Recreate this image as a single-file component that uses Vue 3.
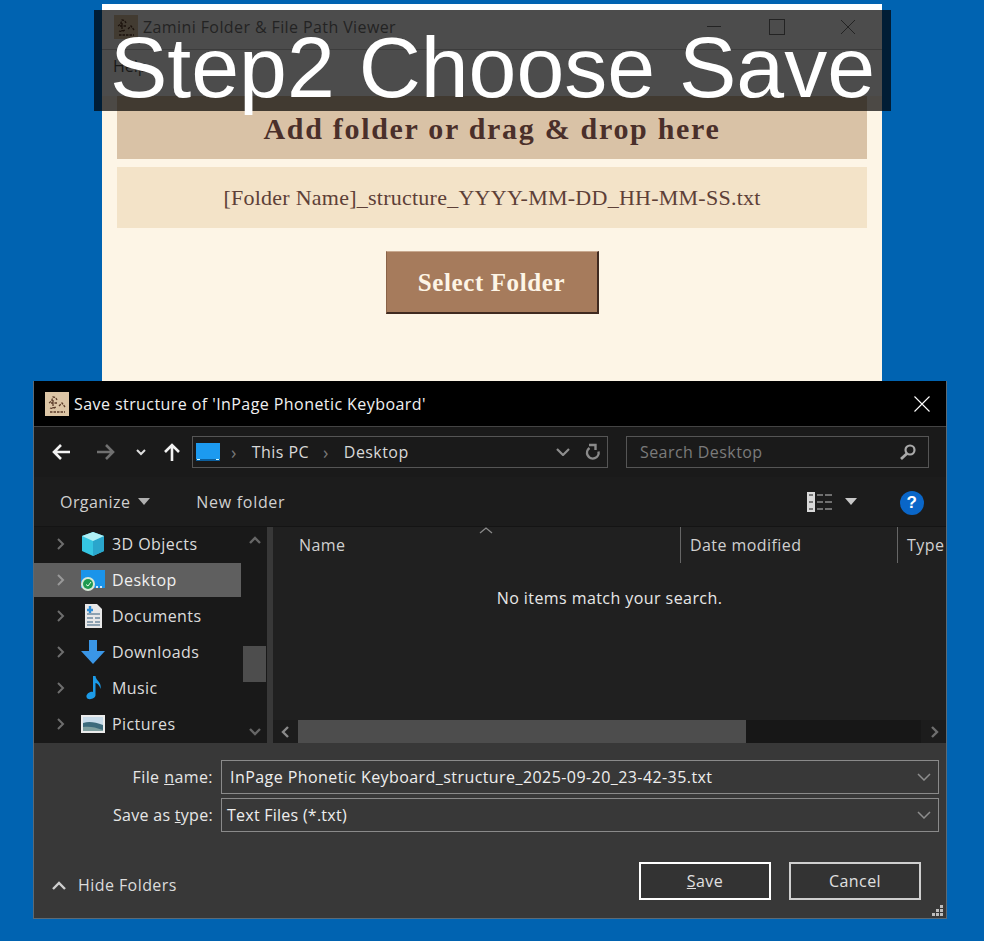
<script setup>
const carpetas = ['3D Objects', 'Desktop', 'Documents', 'Downloads', 'Music', 'Pictures']
</script>

<template>
  <div class="escritorio">
    <!-- ventana de la app, detras del dialogo -->
    <section class="app-win">
      <header class="app-title">
        <svg class="app-icon" viewBox="0 0 24 24">
          <rect width="24" height="24" fill="#dcc5a5" />
          <path d="M4 11c2-1 3-3 4-6 2 0 3 1 4 3M6 11h7M8 8v8M5 16c2 1 4 0 6-1M14 14l3-3 3 4M5 20h15" stroke="#5a3a28" stroke-width="1.300" stroke-dasharray="2.500 1" fill="none" />
        </svg>
        <span class="app-name">Zamini Folder &amp; File Path Viewer</span>
        <span class="win-min"></span>
        <span class="win-max"></span>
        <svg class="win-x" viewBox="0 0 16 16"><path d="M1 1l14 14M15 1L1 15" stroke="#777" fill="none" /></svg>
      </header>
      <div class="app-menu">Help</div>
      <div class="app-body">
        <div class="zona-drop">Add folder or drag &amp; drop here</div>
        <div class="zona-nombre">[Folder Name]_structure_YYYY-MM-DD_HH-MM-SS.txt</div>
        <button class="btn-folder">Select Folder</button>
      </div>
    </section>

    <!-- titulo sobrepuesto -->
    <div class="rotulo">Step2 Choose Save</div>

    <!-- dialogo guardar -->
    <section class="dialogo">
      <header class="dlg-title">
        <svg class="dlg-icon" viewBox="0 0 24 24">
          <rect width="24" height="24" fill="#dcc5a5" />
          <path d="M4 11c2-1 3-3 4-6 2 0 3 1 4 3M6 11h7M8 8v8M5 16c2 1 4 0 6-1M14 14l3-3 3 4M5 20h15" stroke="#5a3a28" stroke-width="1.300" stroke-dasharray="2.500 1" fill="none" />
        </svg>
        <span>Save structure of 'InPage Phonetic Keyboard'</span>
        <svg class="dlg-x" viewBox="0 0 16 16"><path d="M.5.5l15 15M15.500.5l-15 15" stroke="#fff" stroke-width="1.100" fill="none" /></svg>
      </header>

      <div class="nav-row">
        <svg class="nav-arrow" viewBox="0 0 20 18"><path d="M19 9H3M10 2L3 9l7 7" stroke="#f2f2f2" stroke-width="2.600" fill="none" /></svg>
        <svg class="nav-arrow fwd" viewBox="0 0 20 18"><path d="M1 9h16M10 2l7 7-7 7" stroke="#707070" stroke-width="2.600" fill="none" /></svg>
        <svg class="nav-mini" viewBox="0 0 10 7"><path d="M1 1l4 4 4-4" stroke="#ddd" stroke-width="2" fill="none" /></svg>
        <svg class="nav-up" viewBox="0 0 18 20"><path d="M9 19V3M2 10l7-7 7 7" stroke="#f2f2f2" stroke-width="2.600" fill="none" /></svg>
        <div class="ruta">
          <svg class="pc" viewBox="0 0 24 18"><rect width="24" height="18" fill="#1c9af0" /><rect y="16" width="24" height="2" fill="#0c5f9e" /><path d="M1 16.500h3M20 16.500h3" stroke="#dff" /></svg>
          <span class="sep">&rsaquo;</span><span>This PC</span>
          <span class="sep">&rsaquo;</span><span>Desktop</span>
          <svg class="ruta-ch" viewBox="0 0 14 8"><path d="M1 1l6 6 6-6" stroke="#8d8d8d" stroke-width="2.200" fill="none" /></svg>
          <svg class="refresh" viewBox="0 0 16 18"><path d="M13.500 8.500a5.800 5.800 0 1 1-9-3.500M4 2h6.500v5" stroke="#8a8a8a" stroke-width="2.400" fill="none" /></svg>
        </div>
        <div class="buscar">
          <span>Search Desktop</span>
          <svg viewBox="0 0 18 18"><circle cx="11" cy="7" r="4.500" stroke="#a9a9a9" stroke-width="2.200" fill="none" /><path d="M8 10.500L2 16" stroke="#a9a9a9" stroke-width="2.800" /></svg>
        </div>
      </div>

      <div class="cmd-row">
        <span class="organize">Organize</span>
        <i class="tri"></i>
        <span class="nueva">New folder</span>
        <svg class="vista" viewBox="0 0 26 20">
          <rect width="8" height="20" fill="#d9d9d9" />
          <path d="M2 3h4M2 10h4M2 17h4" stroke="#777" stroke-width="2" />
          <path d="M10 3h6M18 3h7M10 10h6M18 10h7M10 17h6M18 17h7" stroke="#8c8c8c" stroke-width="1.500" />
        </svg>
        <i class="tri vista-tri"></i>
        <span class="ayuda">?</span>
      </div>

      <div class="paneles">
        <aside class="arbol">
          <ul>
            <li v-for="c in carpetas" :key="c" :class="{ sel: c === 'Desktop' }">
              <svg class="exp" viewBox="0 0 8 12"><path d="M1 1l5 5-5 5" stroke="#6e6e6e" stroke-width="2" fill="none" /></svg>
              <svg v-if="c === '3D Objects'" class="ico" viewBox="0 0 26 26">
                <path d="M13 1l11 4v15l-11 5-11-5V5z" fill="#35c6e2" /><path d="M13 10l11-5v15l-11 5z" fill="#2aa6cc" /><path d="M2 5l11-4 11 4-11 5z" fill="#b0f0f5" />
              </svg>
              <svg v-else-if="c === 'Desktop'" class="ico" viewBox="0 0 26 26">
                <rect x="1" y="3" width="24" height="18" fill="#1b94ea" /><path d="M16 20h8" stroke="#cfe8ff" stroke-dasharray="2 2" stroke-width="2" /><circle cx="8" cy="17" r="7" fill="#d8e8d8" /><circle cx="8" cy="17" r="5" fill="#1f9a50" /><path d="M6 17.500l2 1.500 3-4" stroke="#e8ffe8" fill="none" />
              </svg>
              <svg v-else-if="c === 'Documents'" class="ico" viewBox="0 0 26 26">
                <path d="M5 1h12l5 5v19H5z" fill="#e8e8e8" /><path d="M7 11h13M7 15h6M15 15h5M7 19h6M15 19h5M7 22h13" stroke="#6f8aa0" stroke-width="1.300" /><path d="M10 3v7M7 7h6" stroke="#2f8fd8" stroke-width="2.400" />
              </svg>
              <svg v-else-if="c === 'Downloads'" class="ico" viewBox="0 0 26 26">
                <path d="M9 1h8v11h8L13 25 1 12h8z" fill="#3a96e6" />
              </svg>
              <svg v-else-if="c === 'Music'" class="ico" viewBox="0 0 26 26">
                <path d="M13 1h2.500c.5 5 6.500 6 5 13-1-4-3-5.500-5-6v12c0 4-8 6-9 2-.7-3 4-6 6.500-5z" fill="#1c9be8" />
              </svg>
              <svg v-else class="ico" viewBox="0 0 26 26">
                <rect x="1" y="4" width="24" height="18" fill="#ececec" /><rect x="3" y="6" width="20" height="14" fill="#c8dcea" /><path d="M3 12c6-2 12-1 20 2v6H3z" fill="#3d6b7c" /><path d="M3 16c6-1 12 0 20 3v1H3z" fill="#7f9f9f" />
              </svg>
              <span>{{ c }}</span>
            </li>
          </ul>
          <div class="arbol-scroll">
            <svg viewBox="0 0 12 8"><path d="M1 7l5-5 5 5" stroke="#666" stroke-width="2.400" fill="none" /></svg>
            <div class="arbol-pista"><div class="arbol-thumb"></div></div>
            <svg viewBox="0 0 12 8"><path d="M1 1l5 5 5-5" stroke="#666" stroke-width="2.400" fill="none" /></svg>
          </div>
        </aside>
        <main class="lista">
          <div class="cabecera">
            <svg class="orden" viewBox="0 0 14 7"><path d="M1 6l6-5 6 5" stroke="#8a8a8a" stroke-width="1.300" fill="none" /></svg>
            <span class="col-nombre">Name</span>
            <span class="col-fecha">Date modified</span>
            <span class="col-tipo">Type</span>
          </div>
          <div class="vacio">No items match your search.</div>
          <div class="h-scroll">
            <svg class="h-izq" viewBox="0 0 8 12"><path d="M7 1L2 6l5 5" stroke="#8a8a8a" stroke-width="2.400" fill="none" /></svg>
            <div class="h-pista"><div class="h-thumb"></div></div>
            <svg class="h-der" viewBox="0 0 8 12"><path d="M1 1l5 5-5 5" stroke="#6e6e6e" stroke-width="2.400" fill="none" /></svg>
          </div>
        </main>
      </div>

      <div class="pie">
        <div class="campo">
          <label>File <u>n</u>ame:</label>
          <div class="combo nombre">
            <span>InPage Phonetic Keyboard_structure_2025-09-20_23-42-35.txt</span>
            <svg viewBox="0 0 14 8"><path d="M1 1l6 6 6-6" stroke="#8d8d8d" stroke-width="1.500" fill="none" /></svg>
          </div>
        </div>
        <div class="campo segundo">
          <label>Save as <u>t</u>ype:</label>
          <div class="combo tipo">
            <span>Text Files (*.txt)</span>
            <svg viewBox="0 0 14 8"><path d="M1 1l6 6 6-6" stroke="#8d8d8d" stroke-width="1.500" fill="none" /></svg>
          </div>
        </div>
        <div class="acciones">
          <svg class="ocultar-ch" viewBox="0 0 14 9"><path d="M1 8l6-6 6 6" stroke="#cfcfcf" stroke-width="2.400" fill="none" /></svg>
          <span class="ocultar">Hide Folders</span>
          <button class="btn-dlg guardar"><u>S</u>ave</button>
          <button class="btn-dlg">Cancel</button>
        </div>
        <svg class="grip" viewBox="0 0 12 12"><path d="M9 1h3v3H9zM5 5h3v3H5zM9 5h3v3H9zM1 9h3v3H1zM5 9h3v3H5zM9 9h3v3H9z" fill="#bdbdbd" /></svg>
      </div>
    </section>
  </div>
</template>

<style>
html, body { margin: 0; background: #0063b1; }
</style>

<style scoped>
.escritorio {
  position: relative;
  width: 984px;
  height: 941px;
  overflow: hidden;
  background: #0063b1;
  font-family: "Open Sans", sans-serif;
}

/* ventana de fondo */
.app-win {
  position: absolute;
  left: 102px;
  top: 4px;
  width: 780px;
  height: 377px;
  display: flex;
  flex-direction: column;
  background: #fdf5e6;
}
.app-title {
  height: 46px;
  flex: none;
  background: #fff;
  border-bottom: 1px solid #c8c8c8;
  display: flex;
  align-items: center;
  padding-left: 12px;
  box-sizing: border-box;
}
.app-icon { width: 24px; height: 24px; }
.app-name { margin-left: 5px; font-size: 16px; letter-spacing: .4px; color: #777; }
.win-min { width: 14px; height: 1px; background: #777; margin-left: auto; }
.win-max { width: 14px; height: 14px; border: 1px solid #777; margin-left: 48px; }
.win-x { width: 16px; height: 16px; margin: 0 26px 0 55px; }
.app-menu { height: 46px; flex: none; padding: 5px 0 0 11px; font-size: 16px; color: #555; background: #fff; box-sizing: border-box; }
.app-body { flex: 1; display: flex; flex-direction: column; align-items: center; padding: 0 15px; }
.zona-drop {
  align-self: stretch;
  height: 63px;
  background: #d9c2a6;
  color: #4a2f2a;
  display: flex;
  align-items: center;
  justify-content: center;
  padding-top: 2px;
  box-sizing: border-box;
  font: bold 30px "Liberation Serif", serif;
  letter-spacing: 1.700px;
}
.zona-nombre {
  align-self: stretch;
  height: 61px;
  margin-top: 8px;
  background: #f3e3c8;
  color: #5d4037;
  display: flex;
  align-items: center;
  justify-content: center;
  font: 22px "Liberation Serif", serif;
  letter-spacing: .25px;
}
.btn-folder {
  width: 213px;
  height: 63px;
  margin-top: 23px;
  background: #a67b5c;
  border: none;
  border-right: 2px solid #3f2a20;
  border-bottom: 2px solid #3f2a20;
  border-top: 1px solid #c9a98f;
  border-left: 1px solid #8a6348;
  color: #fdf5e6;
  font: bold 25px "Liberation Serif", serif;
  letter-spacing: .6px;
  padding: 2px 0 0;
}

/* rotulo */
.rotulo {
  position: absolute;
  left: 94px;
  top: 10px;
  width: 797px;
  height: 101px;
  background: rgba(0, 0, 0, .7);
  color: #fff;
  font: 86px/114px "Liberation Sans", sans-serif;
  text-align: center;
  white-space: nowrap;
}

/* dialogo */
.dialogo {
  position: absolute;
  left: 33px;
  top: 381px;
  width: 914px;
  height: 538px;
  display: flex;
  flex-direction: column;
  background: #383838;
  box-shadow: inset 0 0 0 1px #5c6a75;
  color: #e8e8e8;
  font-size: 16px;
  letter-spacing: .43px;
}
.dlg-title {
  height: 46px;
  flex: none;
  margin: 0 1px;
  background: #000;
  border-bottom: 1px solid #444;
  display: flex;
  align-items: center;
  padding-left: 11px;
  color: #f0f0f0;
  box-sizing: border-box;
}
.dlg-icon { width: 24px; height: 24px; margin-right: 5px; }
.dlg-x { width: 16px; height: 16px; margin: 0 16px 0 auto; }

.nav-row {
  height: 50px;
  flex: none;
  margin: 0 1px;
  background: #1a1a1a;
  display: flex;
  align-items: center;
  box-sizing: border-box;
}
.nav-arrow { width: 20px; height: 18px; margin-left: 17px; }
.nav-arrow.fwd { margin-left: 25px; }
.nav-mini { width: 10px; height: 7px; margin-left: 20px; }
.nav-up { width: 18px; height: 20px; margin-left: 17px; }
.ruta {
  width: 416px;
  height: 32px;
  margin-left: 11px;
  border: 1px solid #555;
  box-sizing: border-box;
  display: flex;
  align-items: center;
  color: #d8d8d8;
  padding-left: 3px;
}
.pc { width: 24px; height: 18px; margin-right: 11px; }
.sep { color: #777; margin-right: 15px; font-size: 18px; line-height: 1; }
.ruta span + .sep { margin-left: 14px; }
.ruta-ch { width: 14px; height: 8px; margin-left: auto; }
.refresh { width: 16px; height: 18px; margin: 0 6px 0 15px; }
.buscar {
  width: 303px;
  height: 32px;
  margin-left: 18px;
  border: 1px solid #555;
  box-sizing: border-box;
  display: flex;
  align-items: center;
  justify-content: space-between;
  padding: 0 11px 0 13px;
  color: #7b7b7b;
}
.buscar svg { width: 18px; height: 18px; }

.cmd-row {
  height: 49px;
  flex: none;
  margin: 0 1px;
  background: #1c1c1c;
  display: flex;
  align-items: center;
  color: #d0d0d0;
  font-size: 16px;
}
.organize { margin-left: 26px; }
.tri { width: 0; height: 0; border: 6px solid transparent; border-top: 7px solid #b0b0b0; border-bottom: 0; margin-left: 8px; }
.nueva { margin-left: 46px; letter-spacing: .7px; }
.vista { width: 26px; height: 20px; margin-left: auto; }
.vista-tri { border-top-color: #c8c8c8; margin-left: 12px; }
.ayuda {
  width: 24px;
  height: 24px;
  margin: 2px 22px 0 43px;
  border-radius: 50%;
  background: #0a66c8;
  color: #fff;
  font: bold 17px/24px "Liberation Sans", sans-serif;
  text-align: center;
}

.paneles {
  height: 217px;
  flex: none;
  margin: 0 1px;
  display: flex;
  border-top: 1px solid #141414;
  box-sizing: border-box;
}
.arbol { width: 233px; flex: none; background: #191919; display: flex; }
.arbol ul { list-style: none; margin: 0; padding: 0; flex: 1; min-width: 0; }
.arbol li {
  height: 34px;
  margin: 0 0 2px;
  display: flex;
  align-items: center;
  color: #dcdcdc;
}
.arbol li.sel { background: #5f5f5f; color: #f0f0f0; }
.exp { width: 8px; height: 12px; margin-left: 23px; }
.sel .exp path { stroke: #999; }
.ico { width: 26px; height: 26px; margin: 0 6px 0 15px; flex: none; }
.arbol-scroll { width: 24px; margin-left: 2px; flex: none; display: flex; flex-direction: column; align-items: center; padding: 9px 0 7px; box-sizing: border-box; }
.arbol-scroll svg { width: 12px; height: 8px; flex: none; }
.arbol-pista { flex: 1; width: 100%; }
.arbol-thumb { width: 23px; height: 36px; margin-top: 102px; background: #4d4d4d; }
.lista {
  flex: 1;
  min-width: 0;
  margin-left: 6px;
  background: #202020;
  display: flex;
  flex-direction: column;
  position: relative;
}
.cabecera { height: 37px; flex: none; position: relative; color: #d0d0d0; }
.cabecera span { position: absolute; top: 7px; }
.orden { position: absolute; left: 206px; top: 0; width: 14px; height: 7px; }
.col-nombre { left: 26px; }
.col-fecha { left: 407px; border-left: 1px solid #666; padding-left: 9px; height: 36px; top: 0 !important; line-height: 37px; }
.col-tipo { left: 624px; border-left: 1px solid #666; padding-left: 9px; height: 36px; top: 0 !important; line-height: 37px; }
.vacio { flex: 1; text-align: center; padding-top: 23px; color: #e8e8e8; }
.h-scroll { height: 23px; flex: none; display: flex; align-items: center; background: #1c1c1c; }
.h-izq { width: 8px; height: 12px; margin-left: 8px; }
.h-pista { width: 623px; height: 23px; margin-left: 9px; background: #171717; }
.h-thumb { width: 448px; height: 23px; background: #4d4d4d; }
.h-der { width: 8px; height: 12px; margin-left: 10px; }

.pie { flex: 1; margin: 0 1px 1px; position: relative; padding-top: 17px; box-sizing: border-box; }
.campo { display: flex; align-items: center; height: 34px; }
.campo.segundo { margin-top: 4px; }
.campo label { width: 179px; flex: none; text-align: right; color: #e6e6e6; white-space: nowrap; }
.campo.segundo label { letter-spacing: .3px; }
.combo {
  width: 718px;
  height: 34px;
  margin-left: 8px;
  border: 1px solid #8a8a8a;
  box-sizing: border-box;
  display: flex;
  align-items: center;
  justify-content: space-between;
  padding: 0 7px 0 5px;
  color: #eee;
}
.combo.nombre { padding-left: 8px; }
.combo.tipo { letter-spacing: .25px; }
.combo svg { width: 14px; height: 8px; }
.acciones { display: flex; align-items: center; height: 38px; margin-top: 30px; }
.ocultar-ch { width: 14px; height: 9px; margin: 8px 0 0 18px; }
.ocultar { margin: 8px auto 0 12px; color: #dcdcdc; }
.btn-dlg {
  width: 132px;
  height: 38px;
  margin-right: 25px;
  background: #333;
  border: 2px solid #cfcfcf;
  box-sizing: border-box;
  color: #e0e0e0;
  font: 16px "Open Sans", sans-serif;
  letter-spacing: .43px;
  padding: 0;
}
.btn-dlg.guardar { margin-right: 18px; border-color: #fff; }
.grip { position: absolute; right: 3px; bottom: 2px; width: 12px; height: 12px; }
</style>
